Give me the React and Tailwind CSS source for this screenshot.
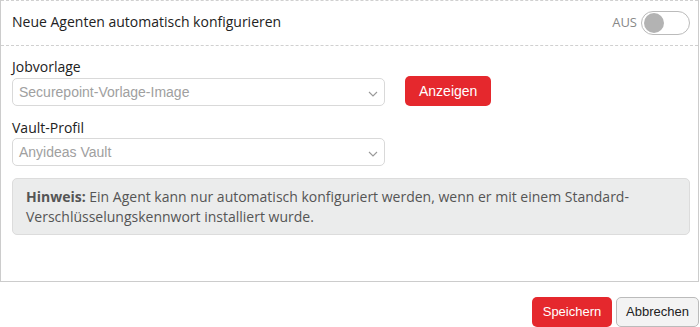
import React, { useState } from 'react'

function Chevron() {
  return (
    <svg width="10" height="6" viewBox="0 0 10 6" className="absolute right-[6px] top-[12px]">
      <path d="M1 1l4 4 4-4" fill="none" stroke="#999" strokeWidth="1.1" />
    </svg>
  )
}

function SelectBox({ value }) {
  return (
    <div className="relative w-[373px] h-[28px] border border-[#d9d9d9] rounded-[5px] bg-white">
      <div className="pl-[6px] leading-[26px] text-[14px] text-[#a0a0a0] font-['Liberation_Sans',Arial,sans-serif]">
        {value}
      </div>
      <Chevron />
    </div>
  )
}

export default function App() {
  const [on, setOn] = useState(false)

  return (
    <div className="w-[700px] h-[327px] bg-white font-['Open_Sans',sans-serif] text-[#222]">
      <div className="w-[699px] h-[282px] border-x border-b border-[#ccc]">
        <div className="flex items-center justify-between h-[46px] pl-[11px] pr-[8px] border-y border-dashed border-[#d0d0d0]">
          <span className="text-[14px] leading-[20px] mt-[-2px]">Neue Agenten automatisch konfigurieren</span>
          <div className="flex items-center gap-[4px]">
            <span className="text-[13px] text-[#888]">AUS</span>
            <button
              onClick={() => setOn(!on)}
              className="w-[49px] h-[24px] rounded-full border border-[#bbb] bg-white flex items-center px-[2px]"
            >
              <span className="w-[20px] h-[20px] rounded-full bg-[#b3b3b3] block" />
            </button>
          </div>
        </div>
        <div className="px-[11px] pt-[11px]">
          <div className="text-[14px] leading-[20px]">Jobvorlage</div>
          <div className="flex items-center gap-[20px]">
            <SelectBox value="Securepoint-Vorlage-Image" />
            <button className="bg-[#e5282d] text-white rounded-[5px] px-[14px] h-[30px] text-[14px] font-['Liberation_Sans',Arial,sans-serif] -mt-[1px]">
              Anzeigen
            </button>
          </div>
          <div className="text-[14px] leading-[20px] mt-[12px]">Vault-Profil</div>
          <div>
            <SelectBox value="Anyideas Vault" />
          </div>
          <div className="mt-[12px] w-[678px] h-[57px] bg-[#ebecec] border border-[#dcdcdc] rounded-[5px] px-[13px] pt-[8px] text-[14px] leading-[20px] text-[#555]">
            <p>
              <b className="font-bold">Hinweis:</b> Ein Agent kann nur automatisch konfiguriert werden, wenn er mit einem Standard-Verschlüsselungskennwort installiert wurde.
            </p>
          </div>
        </div>
      </div>
      <div className="flex justify-end gap-[4px] pt-[15px] pr-[1px]">
        <button className="bg-[#e5282d] text-white rounded-[5px] w-[80px] h-[30px] text-[13px] font-['Liberation_Sans',Arial,sans-serif]">
          Speichern
        </button>
        <button className="bg-[#f3f3f3] text-[#222] border border-[#bbb] rounded-[5px] w-[83px] h-[30px] text-[13px] font-['Liberation_Sans',Arial,sans-serif]">
          Abbrechen
        </button>
      </div>
    </div>
  )
}
